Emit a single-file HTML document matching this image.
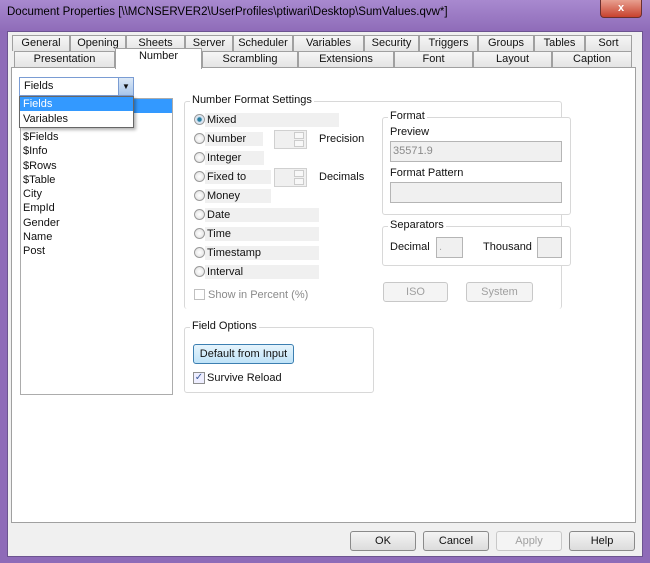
<!DOCTYPE html>
<html><head><style>
*{margin:0;padding:0;box-sizing:border-box}
body{width:650px;height:563px;overflow:hidden;background:#8e6bb8;font-family:"Liberation Sans",sans-serif;font-size:11px;color:#111;position:relative}
.a{position:absolute}
.tab{position:absolute;height:16px;border:1px solid #a0a0a0;border-bottom:none;background:linear-gradient(#f6f6f6,#e4e4e4);text-align:center;line-height:15px;font-size:11px}
.gb{position:absolute;border:1px solid #d8d8d8;border-radius:3px}
.gl{position:absolute;background:#fff;padding:0 2px;top:-8px;left:5px}
.rad{position:absolute;width:11px;height:11px;border-radius:50%;border:1px solid #9a9a9a;background:radial-gradient(#fff,#ddd)}
.lab{position:absolute;background:#f0f0f0;height:14px;line-height:14px;padding-left:2px}
.btn{position:absolute;border:1px solid #8a8a8a;border-radius:3px;background:linear-gradient(#f4f4f4,#dcdcdc);text-align:center;line-height:18px}
.dis{color:#a0a0a0;border-color:#c8c8c8;background:#f4f4f4}
.inp{position:absolute;border:1px solid #b5b5b5;background:#f0f0f0}
.spin{position:absolute;width:33px;height:19px;border:1px solid #d0d0d0;background:#f0f0f0}
.spin i{position:absolute;right:2px;width:10px;height:7px;border:1px solid #ccc;background:#f8f8f8}
</style></head><body>
<div class="a" style="left:0;top:0;width:650px;height:32px;background:linear-gradient(#a889cf,#8e6bb8)"></div>
<div class="a" style="left:7px;top:6px;font-size:11.5px;color:#000">Document Properties [\\MCNSERVER2\UserProfiles\ptiwari\Desktop\SumValues.qvw*]</div>
<div class="a" style="left:600px;top:0;width:42px;height:18px;border:1px solid #6a3030;border-top:none;border-radius:0 0 4px 4px;background:linear-gradient(#e8a090,#c8422e);color:#fff;text-align:center;font-weight:bold;line-height:16px">x</div>
<div class="a" style="left:7px;top:31px;width:636px;height:526px;background:#f0f0f0;border:1px solid #6c5490"></div>
<div class="a" style="left:11px;top:67px;width:625px;height:456px;background:#fff;border:1px solid #a0a0a0"></div>

<div class="tab" style="left:12px;top:35px;width:58px">General</div>
<div class="tab" style="left:70px;top:35px;width:56px">Opening</div>
<div class="tab" style="left:126px;top:35px;width:59px">Sheets</div>
<div class="tab" style="left:185px;top:35px;width:48px">Server</div>
<div class="tab" style="left:233px;top:35px;width:60px">Scheduler</div>
<div class="tab" style="left:293px;top:35px;width:71px">Variables</div>
<div class="tab" style="left:364px;top:35px;width:55px">Security</div>
<div class="tab" style="left:419px;top:35px;width:59px">Triggers</div>
<div class="tab" style="left:478px;top:35px;width:56px">Groups</div>
<div class="tab" style="left:534px;top:35px;width:51px">Tables</div>
<div class="tab" style="left:585px;top:35px;width:47px">Sort</div>
<div class="tab" style="left:14px;top:51px;width:101px">Presentation</div>
<div class="tab" style="left:202px;top:51px;width:96px">Scrambling</div>
<div class="tab" style="left:298px;top:51px;width:96px">Extensions</div>
<div class="tab" style="left:394px;top:51px;width:79px">Font</div>
<div class="tab" style="left:473px;top:51px;width:79px">Layout</div>
<div class="tab" style="left:552px;top:51px;width:80px">Caption</div>
<div class="tab" style="left:115px;top:48px;width:87px;height:21px;background:#fff;line-height:14px">Number</div>

<div class="a" style="left:20px;top:98px;width:153px;height:297px;border:1px solid #acacac;background:#fff"></div>
<div class="a" style="left:21px;top:99px;width:151px;height:14px;background:#3399ff"></div>
<div class="a" style="left:23px;top:130px;line-height:14.3px">$Fields<br>$Info<br>$Rows<br>$Table<br>City<br>EmpId<br>Gender<br>Name<br>Post</div>
<div class="a" style="left:19px;top:77px;width:115px;height:19px;border:1px solid #7a9cd3;background:#fff;line-height:17px;padding-left:4px">Fields</div>
<div class="a" style="left:118px;top:78px;width:15px;height:17px;background:linear-gradient(#dbe8f6,#a8c6ea);border-left:1px solid #7a9cd3;text-align:center;font-size:8px;line-height:17px">▼</div>
<div class="a" style="left:19px;top:96px;width:115px;height:32px;border:1px solid #666;background:#fff;box-shadow:2px 2px 3px rgba(0,0,0,.3)"></div>
<div class="a" style="left:20px;top:97px;width:113px;height:14px;background:#3399ff;color:#fff;padding-left:3px;line-height:14px">Fields</div>
<div class="a" style="left:23px;top:112px;line-height:14px">Variables</div>

<div class="gb" style="left:184px;top:101px;width:378px;height:208px;border-bottom:none"><span class="gl">Number Format Settings</span></div>
<div class="rad" style="left:194px;top:114px;background:radial-gradient(#2a7fa0 30%,#cde 40%,#fff)"></div><div class="lab" style="left:205px;top:113px;width:134px">Mixed</div>
<div class="rad" style="left:194px;top:133px"></div><div class="lab" style="left:205px;top:132px;width:58px">Number</div>
<div class="rad" style="left:194px;top:152px"></div><div class="lab" style="left:205px;top:151px;width:59px">Integer</div>
<div class="rad" style="left:194px;top:171px"></div><div class="lab" style="left:205px;top:170px;width:66px">Fixed to</div>
<div class="rad" style="left:194px;top:190px"></div><div class="lab" style="left:205px;top:189px;width:66px">Money</div>
<div class="rad" style="left:194px;top:209px"></div><div class="lab" style="left:205px;top:208px;width:114px">Date</div>
<div class="rad" style="left:194px;top:228px"></div><div class="lab" style="left:205px;top:227px;width:114px">Time</div>
<div class="rad" style="left:194px;top:247px"></div><div class="lab" style="left:205px;top:246px;width:114px">Timestamp</div>
<div class="rad" style="left:194px;top:266px"></div><div class="lab" style="left:205px;top:265px;width:114px">Interval</div>
<div class="spin" style="left:274px;top:130px"><i style="top:1px"></i><i style="top:9px"></i></div>
<div class="spin" style="left:274px;top:168px"><i style="top:1px"></i><i style="top:9px"></i></div>
<div class="a" style="left:319px;top:133px">Precision</div>
<div class="a" style="left:319px;top:171px">Decimals</div>
<div class="a" style="left:194px;top:289px;width:11px;height:11px;border:1px solid #c0c0c0"></div>
<div class="a" style="left:208px;top:289px;color:#8a8a8a">Show in Percent (%)</div>

<div class="gb" style="left:382px;top:117px;width:189px;height:98px;background:#fff"><span class="gl">Format</span></div>
<div class="a" style="left:390px;top:126px">Preview</div>
<div class="inp" style="left:390px;top:141px;width:172px;height:21px;color:#8a8a8a;line-height:19px;padding-left:2px">35571.9</div>
<div class="a" style="left:390px;top:167px">Format Pattern</div>
<div class="inp" style="left:390px;top:182px;width:172px;height:21px"></div>
<div class="gb" style="left:382px;top:226px;width:189px;height:40px;background:#fff"><span class="gl">Separators</span></div>
<div class="a" style="left:390px;top:241px">Decimal</div>
<div class="inp" style="left:436px;top:237px;width:27px;height:21px;color:#aaa;padding-left:2px;line-height:18px">.</div>
<div class="a" style="left:483px;top:241px">Thousand</div>
<div class="inp" style="left:537px;top:237px;width:25px;height:21px"></div>
<div class="btn dis" style="left:383px;top:282px;width:65px;height:20px">ISO</div>
<div class="btn dis" style="left:466px;top:282px;width:67px;height:20px">System</div>

<div class="gb" style="left:184px;top:327px;width:190px;height:66px"><span class="gl">Field Options</span></div>
<div class="btn" style="left:193px;top:344px;width:101px;height:20px;border-color:#3c7fb1;background:linear-gradient(#e6f4fc,#bfe3f8)">Default from Input</div>
<div class="a" style="left:193px;top:372px;width:12px;height:12px;border:1px solid #8e8f8f;background:#eef;font-size:10px;line-height:10px;color:#3a5a9a;text-align:center">✓</div>
<div class="a" style="left:207px;top:372px">Survive Reload</div>

<div class="btn" style="left:350px;top:531px;width:66px;height:20px">OK</div>
<div class="btn" style="left:423px;top:531px;width:66px;height:20px">Cancel</div>
<div class="btn dis" style="left:496px;top:531px;width:66px;height:20px">Apply</div>
<div class="btn" style="left:569px;top:531px;width:66px;height:20px">Help</div>
</body></html>
